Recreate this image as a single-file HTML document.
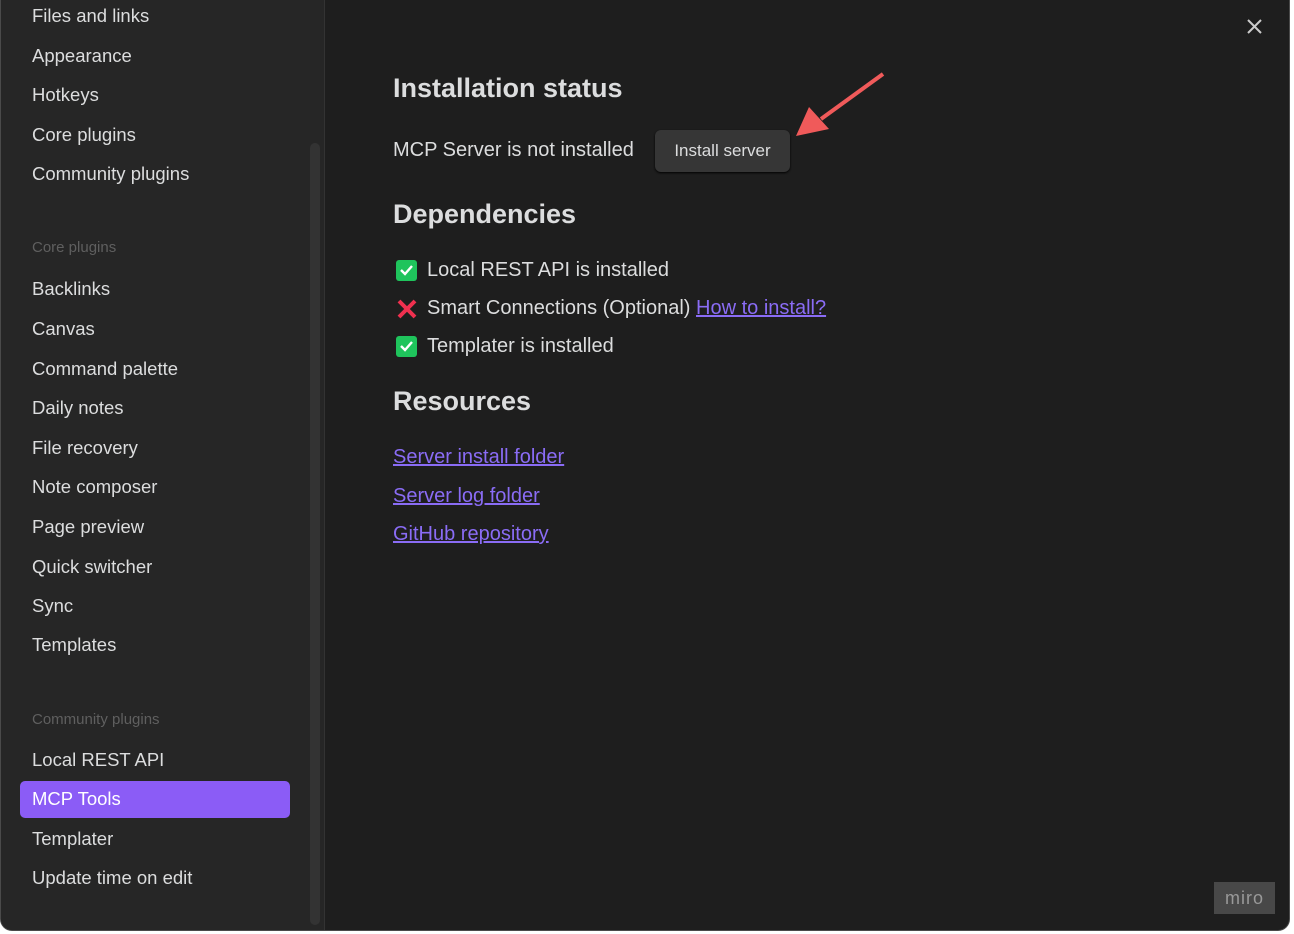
<!DOCTYPE html>
<html><head><style>
*{margin:0;padding:0;box-sizing:border-box}
body{width:1294px;height:934px;background:#fff;font-family:"Liberation Sans",sans-serif;overflow:hidden;position:relative}
.win{position:absolute;left:0;top:-12px;width:1290px;height:943px;background:#1e1e1e;border:1px solid #4a4a4a;border-radius:12px;overflow:hidden}
.side{position:absolute;left:0;top:0;width:324px;height:100%;background:#262626;border-right:1px solid #333}
.it{position:absolute;left:31px;font-size:18.5px;color:#dcddde;line-height:24px}
.hd{position:absolute;left:31px;font-size:15px;color:#5f5f5f;line-height:20px}
.sel{position:absolute;left:19px;top:792px;width:270px;height:37px;background:#8b5cf6;border-radius:5px}
.sb{position:absolute;left:309px;top:154px;width:10px;height:782px;background:#333;border-radius:5px}
h2{position:absolute;left:392px;font-size:27px;font-weight:bold;color:#dcddde}
.t{position:absolute;font-size:20px;color:#dcddde;line-height:26px}
a{color:#8a6cf5;text-decoration:underline}
.btn{position:absolute;left:654px;top:141px;width:135px;height:42px;background:#363636;border-radius:6px;color:#dcddde;font-size:17px;text-align:center;line-height:42px;box-shadow:0 1px 2px #000}
.ck{position:absolute;left:395px;width:21px;height:21px;background:#1fc45c;border-radius:3px}
</style></head><body>
<div class="win">
<div class="side">
<div class="it" style="top:15px">Files and links</div>
<div class="it" style="top:55px">Appearance</div>
<div class="it" style="top:94px">Hotkeys</div>
<div class="it" style="top:134px">Core plugins</div>
<div class="it" style="top:173px">Community plugins</div>
<div class="hd" style="top:249px">Core plugins</div>
<div class="it" style="top:288px">Backlinks</div>
<div class="it" style="top:328px">Canvas</div>
<div class="it" style="top:368px">Command palette</div>
<div class="it" style="top:407px">Daily notes</div>
<div class="it" style="top:447px">File recovery</div>
<div class="it" style="top:486px">Note composer</div>
<div class="it" style="top:526px">Page preview</div>
<div class="it" style="top:566px">Quick switcher</div>
<div class="it" style="top:605px">Sync</div>
<div class="it" style="top:644px">Templates</div>
<div class="hd" style="top:721px">Community plugins</div>
<div class="it" style="top:759px">Local REST API</div>
<div class="sel"></div>
<div class="it" style="top:798px;color:#fff">MCP Tools</div>
<div class="it" style="top:838px">Templater</div>
<div class="it" style="top:877px">Update time on edit</div>
<div class="sb"></div>
</div>
<svg style="position:absolute;left:1245px;top:29px" width="17" height="17"><path d="M2 2L15 15M15 2L2 15" stroke="#ccc" stroke-width="2"/></svg>
<h2 style="top:84px">Installation status</h2>
<div class="t" style="left:392px;top:148px">MCP Server is not installed</div>
<div class="btn">Install server</div>
<svg style="position:absolute;left:790px;top:82px" width="100" height="70"><path d="M92 3L30 48" stroke="#f05a5a" stroke-width="4"/><path d="M5 65L18 36L38 58Z" fill="#f05a5a"/></svg>
<h2 style="top:210px">Dependencies</h2>
<div class="ck" style="top:271px"></div><svg style="position:absolute;left:398px;top:275px" width="15" height="13"><path d="M2 6L6 10L13 2" stroke="#fff" stroke-width="2.4" fill="none"/></svg>
<div class="t" style="left:426px;top:268px">Local REST API is installed</div>
<svg style="position:absolute;left:395px;top:309px" width="22" height="22"><path d="M3 3L19 19M19 3L3 19" stroke="#f0304f" stroke-width="4"/></svg>
<div class="t" style="left:426px;top:306px">Smart Connections (Optional) <a>How to install?</a></div>
<div class="ck" style="top:347px"></div><svg style="position:absolute;left:398px;top:351px" width="15" height="13"><path d="M2 6L6 10L13 2" stroke="#fff" stroke-width="2.4" fill="none"/></svg>
<div class="t" style="left:426px;top:344px">Templater is installed</div>
<h2 style="top:397px">Resources</h2>
<div class="t" style="left:392px;top:455px"><a>Server install folder</a></div>
<div class="t" style="left:392px;top:494px"><a>Server log folder</a></div>
<div class="t" style="left:392px;top:532px"><a>GitHub repository</a></div>
</div>
<div style="position:absolute;left:1214px;top:882px;width:61px;height:32px;background:#484848;color:#999;font-size:18px;text-align:center;line-height:32px;letter-spacing:1px">miro</div>
</body></html>
